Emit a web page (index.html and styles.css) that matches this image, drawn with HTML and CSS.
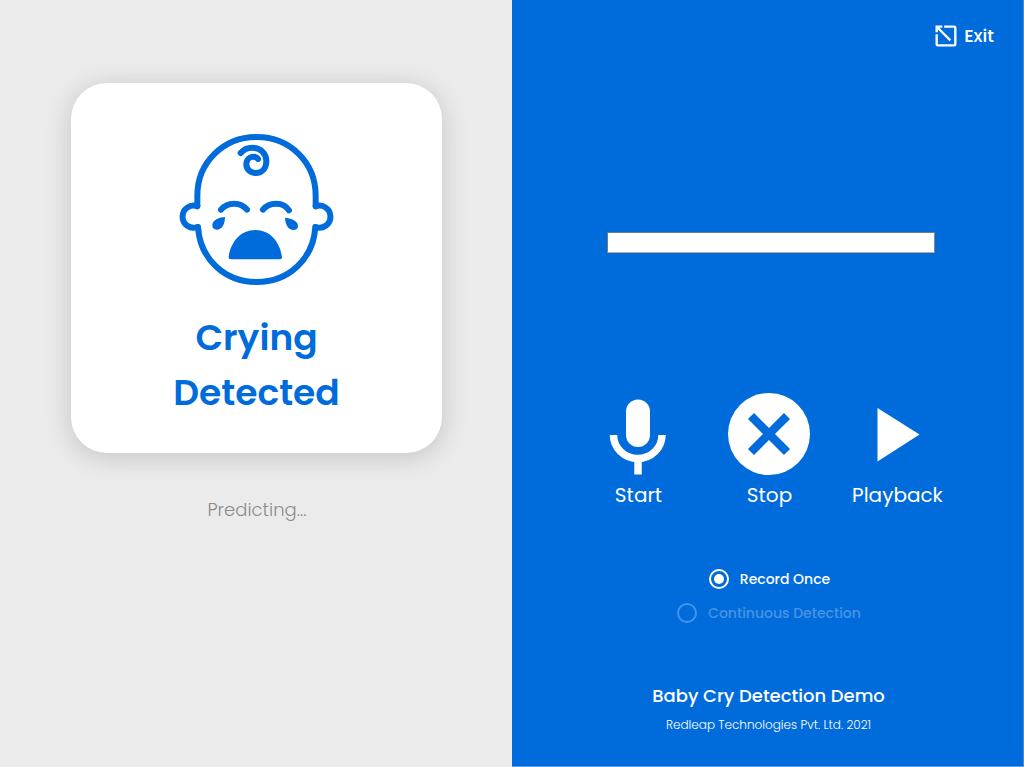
FILE: index.html
```html
<!DOCTYPE html>
<html lang="en">
<head>
<meta charset="utf-8">
<title>Baby Cry Detection Demo</title>
<link rel="stylesheet" href="styles.css">
</head>
<body>
<main class="app">
  <section class="result">
    <div class="card">
      <svg class="baby" viewBox="0 0 525 510">
        <g fill="none" stroke="currentColor" stroke-width="18" stroke-linecap="round" stroke-linejoin="round">
          <path d="M82 243V212C82 112 160 36 260 36S437 112 437 212V243"/>
          <path d="M437 244A33 33 0 1 1 437 306"/>
          <path d="M436 306C430 402 356 471 260 471S90 402 84 306"/>
          <path d="M82 306A33 33 0 1 1 82 244"/>
          <path d="M212 84C222 72 234 68 246 68C272 68 289 86 289 108C289 130 276 144 257 144C240 144 229 132 229 118C229 103 240 95 250 95C257 95 261 98 264 102"/>
          <path d="M153 254C173 230 212 230 231 254M279 254C298 230 340 230 357 256"/>
        </g>
        <g fill="currentColor">
          <path d="M165 276C150 277 127 283 127 301C127 310 133 314 140 314C157 314 165 296 165 276Z"/>
          <path d="M345 278C360 279 384 286 384 303C384 311 378 315 371 315C354 315 346 298 345 278Z"/>
          <path d="M176 396C182 350 212 315 256 315C300 315 330 350 336 396Q337 403 330 403H182Q175 403 176 396Z"/>
        </g>
      </svg>
      <h1 class="status">Crying<br>Detected</h1>
    </div>
    <p class="progress">Predicting...</p>
  </section>
  <section class="panel">
    <header class="top">
      <svg class="exit-icon" viewBox="0 0 66 66" fill="none" stroke="currentColor" stroke-width="7">
        <path d="M31 5H57Q61 5 61 9V57Q61 61 57 61H9Q5 61 5 57V31" stroke-linecap="square"/>
        <path d="M5 22V5H22M6 6L46 46"/>
      </svg>
      <span class="exit">Exit</span>
    </header>
    <div class="meter"></div>
    <div class="controls">
      <div class="control">
        <svg class="icon" viewBox="0 0 82 82">
          <rect x="29" y="6.500" width="24" height="47.500" rx="12" fill="currentColor"/>
          <path d="M16.500 42A24.250 23.500 0 0 0 65 42M41 64V81.500" fill="none" stroke="currentColor" stroke-width="7.500"/>
        </svg>
        <span class="label">Start</span>
      </div>
      <div class="control">
        <svg class="icon" viewBox="0 0 82 82">
          <circle cx="41" cy="41" r="41" fill="currentColor"/>
          <path class="cross" d="M23 23L59 59M59 23L23 59"/>
        </svg>
        <span class="label">Stop</span>
      </div>
      <div class="control">
        <svg class="icon" viewBox="0 0 82 82"><path d="M20.500 15V68.500L62.500 41.500Z" fill="currentColor"/></svg>
        <span class="label label-play">Playback</span>
      </div>
    </div>
    <div class="modes">
      <div class="mode mode-on"><span class="radio radio-on"></span><span>Record Once</span></div>
      <div class="mode mode-off"><span class="radio"></span><span>Continuous Detection</span></div>
    </div>
    <footer class="footer">
      <div class="product">Baby Cry Detection Demo</div>
      <div class="company">Redleap Technologies Pvt. Ltd. 2021</div>
    </footer>
  </section>
</main>
</body>
</html>
```
FILE: styles.css
```css
* { box-sizing: border-box; }
body {
  margin: 0;
  font-family: Poppins, Inter, "Liberation Sans", sans-serif;
}
.app {
  display: grid;
  grid-template-columns: 512px 512px;
  height: 767px;
  overflow: hidden;
}
.result {
  background: #ebebeb;
  padding: 83px 0 0 71px;
}
.card {
  width: 371px;
  height: 370px;
  border-radius: 36px;
  background: #fff;
  box-shadow: 0 4px 26px rgba(0, 0, 0, .17);
  color: #006bdb;
  display: flex;
  flex-direction: column;
  align-items: center;
  padding-top: 42px;
}
.baby { width: 175px; height: 170px; margin-left: 1px; flex: none; }
.status {
  margin: 15px 0 0;
  font-size: 36px;
  line-height: 55px;
  font-weight: 600;
  text-align: center;
  white-space: nowrap;
}
.progress {
  margin: 43px 0 0;
  width: 372px;
  text-align: center;
  font-size: 18px;
  line-height: 28px;
  font-weight: 300;
  color: #8c8c8c;
}
.panel {
  background: #006bdb;
  color: #fff;
  border-right: 1px solid #3d8fe4;
  border-bottom: 1px solid #5aa0e8;
  display: flex;
  flex-direction: column;
}
.top {
  display: flex;
  align-items: center;
  justify-content: flex-end;
  gap: 7px;
  height: 24px;
  margin: 24px 29px 0 0;
}
.exit-icon { width: 22px; height: 22px; }
.exit { font-size: 18px; line-height: 24px; font-weight: 500; }
.meter {
  width: 328px;
  height: 21px;
  margin: 184px 0 0 95px;
  background: #fff;
  border: 1px solid;
  border-color: #7a7a7a #8f857c #b5aaa0 #7a7a7a;
}
.controls {
  display: grid;
  grid-template-columns: 131px 131px 126px;
  margin: 140px 0 0 60.5px;
}
.control { display: flex; flex-direction: column; align-items: center; }
.icon { width: 82px; height: 82px; }
.cross { stroke: #006bdb; stroke-width: 8.5; fill: none; }
.label {
  font-size: 20px;
  line-height: 30px;
  margin: 5px 0 0 1px;
  font-weight: 400;
  white-space: nowrap;
}
.label-play { margin-left: 0; }
.modes {
  margin-top: 57px;
  display: flex;
  flex-direction: column;
  align-items: center;
  gap: 10px;
}
.mode {
  display: flex;
  align-items: center;
  gap: 11px;
  height: 24px;
  font-size: 14px;
  font-weight: 500;
  white-space: nowrap;
}
.mode-on { margin-left: 4px; }
.mode-off { margin-left: 3px; opacity: .27; }
.radio {
  width: 20px;
  height: 20px;
  border: 2px solid #fff;
  border-radius: 50%;
  display: flex;
  align-items: center;
  justify-content: center;
}
.radio-on::after { content: ""; width: 10px; height: 10px; border-radius: 50%; background: #fff; }
.footer { margin: 56px 0 0 2px; text-align: center; white-space: nowrap; }
.product { font-size: 18px; line-height: 30px; font-weight: 500; }
.company { font-size: 12px; line-height: 20px; margin-top: 4px; font-weight: 300; }
```
